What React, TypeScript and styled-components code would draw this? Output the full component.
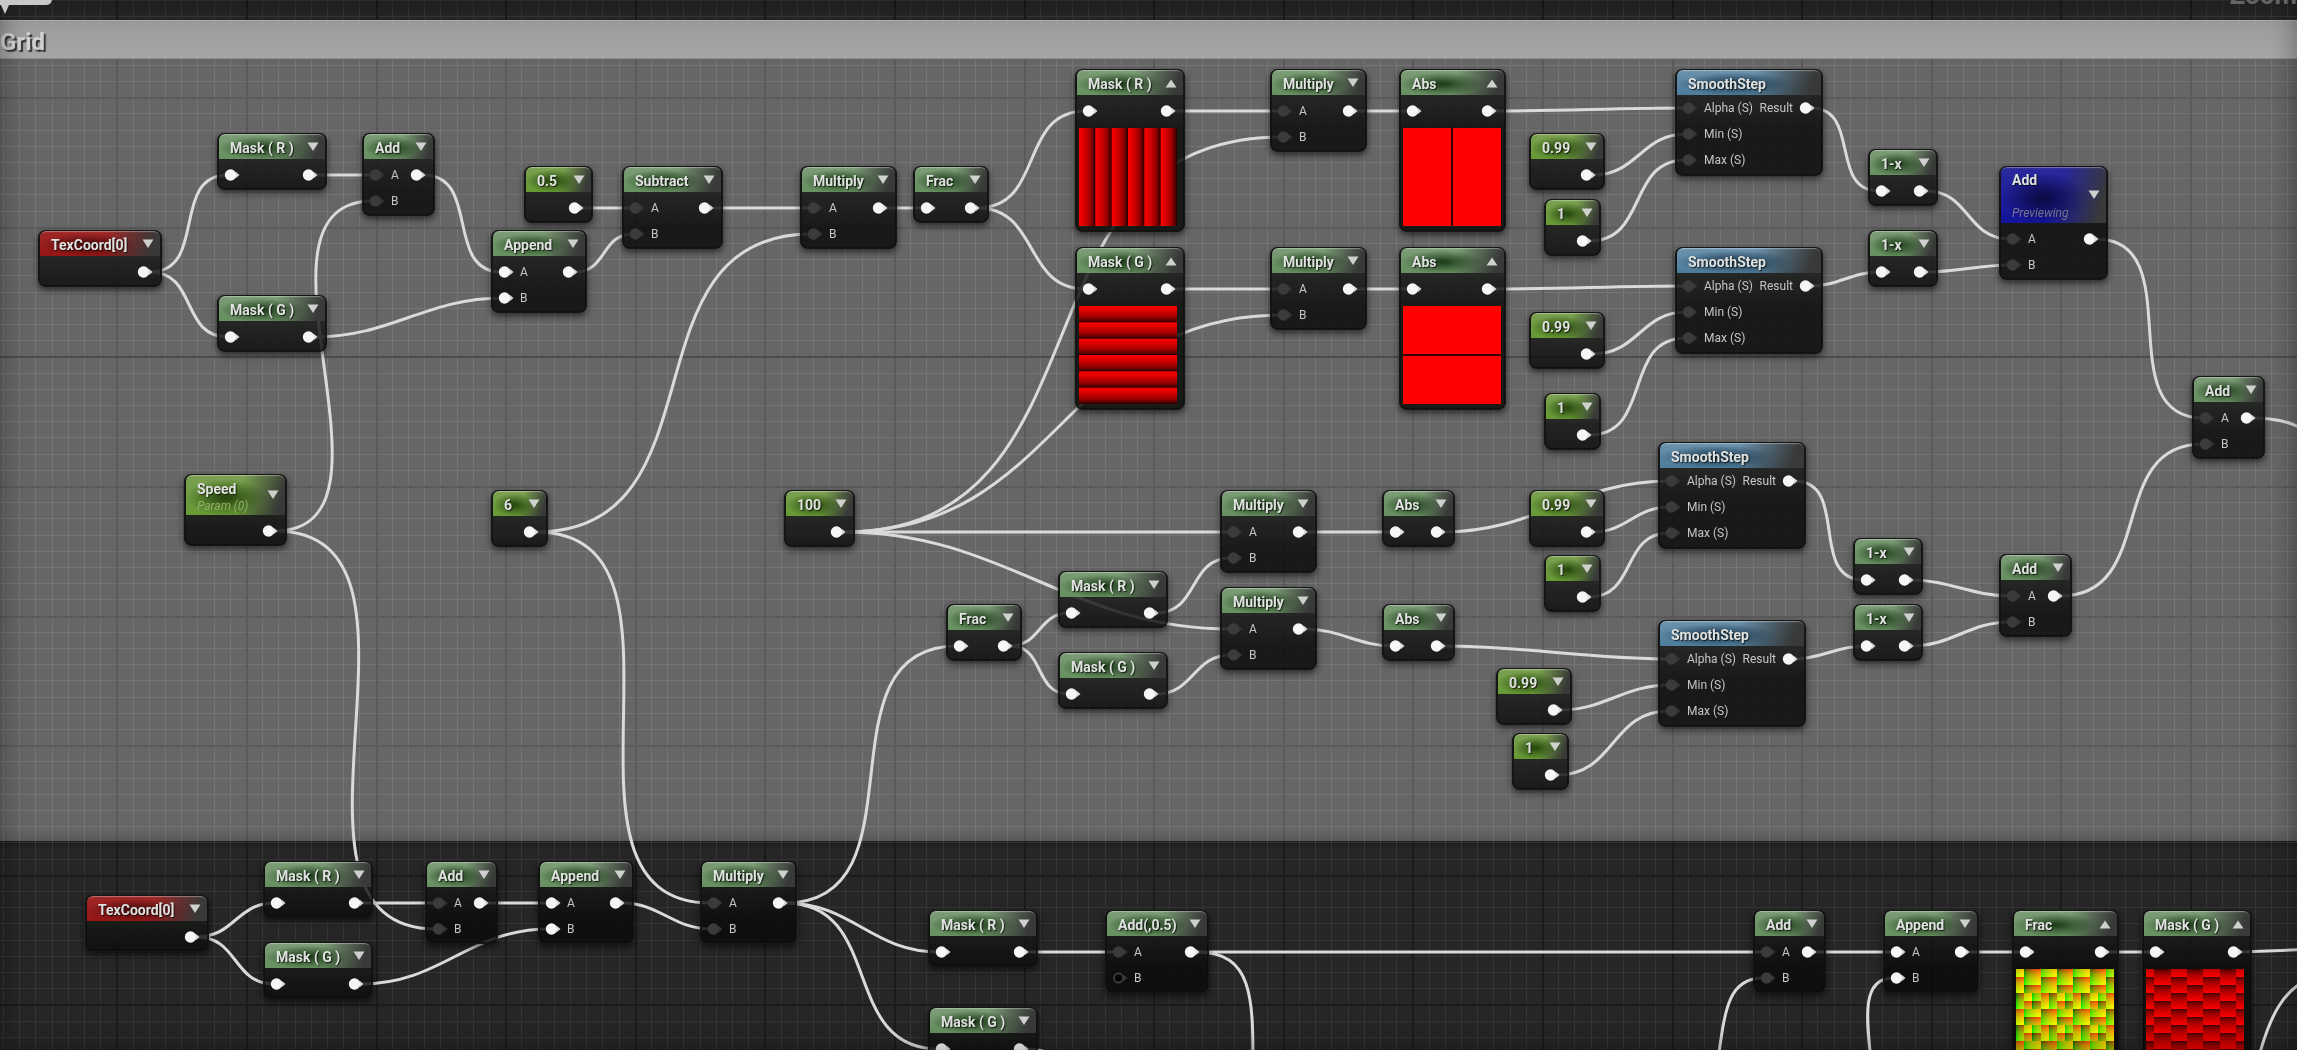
import React from 'react';
import styled, { createGlobalStyle, css } from 'styled-components';

/* ---------- data ---------- */

type Tone = 'math' | 'constant' | 'coord' | 'func' | 'active';
type PreviewKind = 'columns' | 'rows' | 'splitV' | 'splitH' | 'bricks' | 'bricksMixed';
type PinState = 'solid' | 'dim' | 'empty';
type HeaderSize = 'plain' | 'param' | 'tall';

interface InputPin {
  label?: string;
  state: PinState;
}

interface NodeData {
  id: string;
  title: string;
  subtitle?: string;
  tone: Tone;
  x: number;
  y: number;
  w: number;
  inputs: InputPin[];
  outputLabel?: string;
  preview?: PreviewKind;
}

const single: InputPin[] = [{ state: 'solid' }];
const dimAB: InputPin[] = [
  { label: 'A', state: 'dim' },
  { label: 'B', state: 'dim' },
];
const solidAB: InputPin[] = [
  { label: 'A', state: 'solid' },
  { label: 'B', state: 'solid' },
];
const halfAB: InputPin[] = [
  { label: 'A', state: 'dim' },
  { label: 'B', state: 'empty' },
];
const stepPins: InputPin[] = [
  { label: 'Alpha (S)', state: 'dim' },
  { label: 'Min (S)', state: 'dim' },
  { label: 'Max (S)', state: 'dim' },
];

const math = (id: string, title: string, x: number, y: number, w: number, inputs: InputPin[], preview?: PreviewKind): NodeData => ({
  id, title, tone: 'math', x, y, w, inputs, preview,
});
const constant = (id: string, title: string, x: number, y: number, w: number): NodeData => ({
  id, title, tone: 'constant', x, y, w, inputs: [],
});
const step = (id: string, x: number, y: number): NodeData => ({
  id, title: 'SmoothStep', tone: 'func', x, y, w: 148, inputs: stepPins, outputLabel: 'Result',
});

const nodes: NodeData[] = [
  { id: 'tex1', title: 'TexCoord[0]', tone: 'coord', x: 38, y: 230, w: 124, inputs: [] },
  math('maskR1', 'Mask ( R )', 217, 133, 110, single),
  math('maskG1', 'Mask ( G )', 217, 295, 110, single),
  math('add1', 'Add', 362, 133, 73, dimAB),
  math('append1', 'Append', 491, 230, 96, solidAB),
  constant('half', '0.5', 524, 166, 69),
  math('subtract', 'Subtract', 622, 166, 101, dimAB),
  math('mul1', 'Multiply', 800, 166, 97, dimAB),
  math('frac1', 'Frac', 913, 166, 76, single),
  { id: 'speed', title: 'Speed', subtitle: 'Param (0)', tone: 'constant', x: 184, y: 474, w: 103, inputs: [] },
  constant('six', '6', 491, 490, 57),
  constant('hundred', '100', 784, 490, 71),

  math('maskRp', 'Mask ( R )', 1075, 69, 110, single, 'columns'),
  math('maskGp', 'Mask ( G )', 1075, 247, 110, single, 'rows'),
  math('mulR', 'Multiply', 1270, 69, 97, dimAB),
  math('mulG', 'Multiply', 1270, 247, 97, dimAB),
  math('absR', 'Abs', 1399, 69, 107, single, 'splitV'),
  math('absG', 'Abs', 1399, 247, 107, single, 'splitH'),
  constant('c99a', '0.99', 1529, 133, 76),
  constant('c1a', '1', 1544, 199, 57),
  constant('c99b', '0.99', 1529, 312, 76),
  constant('c1b', '1', 1544, 393, 57),
  step('step1', 1675, 69),
  step('step2', 1675, 247),
  math('inv1', '1-x', 1868, 149, 70, single),
  math('inv2', '1-x', 1868, 230, 70, single),
  { id: 'addPrev', title: 'Add', subtitle: 'Previewing', tone: 'active', x: 1999, y: 166, w: 109, inputs: dimAB },
  math('addOut', 'Add', 2192, 376, 73, dimAB),

  math('frac2', 'Frac', 946, 604, 76, single),
  math('maskR2', 'Mask ( R )', 1058, 571, 110, single),
  math('maskG2', 'Mask ( G )', 1058, 652, 110, single),
  math('mul3', 'Multiply', 1220, 490, 97, dimAB),
  math('mul4', 'Multiply', 1220, 587, 97, dimAB),
  math('abs3', 'Abs', 1382, 490, 73, single),
  math('abs4', 'Abs', 1382, 604, 73, single),
  constant('c99c', '0.99', 1529, 490, 76),
  constant('c1c', '1', 1544, 555, 57),
  constant('c99d', '0.99', 1496, 668, 76),
  constant('c1d', '1', 1512, 733, 57),
  step('step3', 1658, 442),
  step('step4', 1658, 620),
  math('inv3', '1-x', 1853, 538, 70, single),
  math('inv4', '1-x', 1853, 604, 70, single),
  math('add4', 'Add', 1999, 554, 73, dimAB),

  { id: 'tex2', title: 'TexCoord[0]', tone: 'coord', x: 85, y: 895, w: 124, inputs: [] },
  math('maskR3', 'Mask ( R )', 263, 861, 110, single),
  math('maskG3', 'Mask ( G )', 263, 942, 110, single),
  math('add5', 'Add', 425, 861, 73, dimAB),
  math('append5', 'Append', 538, 861, 96, solidAB),
  math('mul5', 'Multiply', 700, 861, 97, dimAB),
  math('maskR6', 'Mask ( R )', 928, 910, 110, single),
  math('maskG6', 'Mask ( G )', 928, 1007, 110, single),
  math('addHalf', 'Add(,0.5)', 1105, 910, 104, halfAB),
  math('addRow', 'Add', 1753, 910, 73, dimAB),
  math('appendRow', 'Append', 1883, 910, 96, solidAB),
  math('fracRow', 'Frac', 2012, 910, 107, single, 'bricksMixed'),
  math('maskRow', 'Mask ( G )', 2142, 910, 110, single, 'bricks'),
];

const links: [string, string, number][] = [
  ['tex1', 'maskR1', 0], ['tex1', 'maskG1', 0], ['maskR1', 'add1', 0], ['speed', 'add1', 1],
  ['add1', 'append1', 0], ['maskG1', 'append1', 1], ['half', 'subtract', 0], ['append1', 'subtract', 1],
  ['subtract', 'mul1', 0], ['six', 'mul1', 1], ['mul1', 'frac1', 0], ['frac1', 'maskRp', 0],
  ['frac1', 'maskGp', 0], ['maskRp', 'mulR', 0], ['hundred', 'mulR', 1], ['maskGp', 'mulG', 0],
  ['hundred', 'mulG', 1], ['mulR', 'absR', 0], ['mulG', 'absG', 0], ['absR', 'step1', 0],
  ['absG', 'step2', 0], ['c99a', 'step1', 1], ['c1a', 'step1', 2], ['c99b', 'step2', 1],
  ['c1b', 'step2', 2], ['step1', 'inv1', 0], ['step2', 'inv2', 0], ['inv1', 'addPrev', 0],
  ['inv2', 'addPrev', 1], ['addPrev', 'addOut', 0], ['add4', 'addOut', 1],
  ['hundred', 'mul3', 0], ['hundred', 'mul4', 0], ['frac2', 'maskR2', 0], ['frac2', 'maskG2', 0],
  ['maskR2', 'mul3', 1], ['maskG2', 'mul4', 1], ['mul3', 'abs3', 0], ['mul4', 'abs4', 0],
  ['abs3', 'step3', 0], ['abs4', 'step4', 0], ['c99c', 'step3', 1], ['c1c', 'step3', 2],
  ['c99d', 'step4', 1], ['c1d', 'step4', 2], ['step3', 'inv3', 0], ['step4', 'inv4', 0],
  ['inv3', 'add4', 0], ['inv4', 'add4', 1],
  ['tex2', 'maskR3', 0], ['tex2', 'maskG3', 0], ['maskR3', 'add5', 0], ['speed', 'add5', 1],
  ['add5', 'append5', 0], ['maskG3', 'append5', 1], ['six', 'mul5', 0], ['append5', 'mul5', 1],
  ['mul5', 'frac2', 0], ['mul5', 'maskR6', 0], ['mul5', 'maskG6', 0], ['maskR6', 'addHalf', 0],
  ['addHalf', 'addRow', 0], ['addRow', 'appendRow', 0], ['appendRow', 'fracRow', 0], ['fracRow', 'maskRow', 0],
];

/* Links whose other end is outside the visible part of the graph. */
const openLinks = [
  'M2253 418 C2282 418 2300 424 2330 446',
  'M1197 952 C1254 952 1253 1000 1253 1070',
  'M1718 1060 C1725 1010 1728 978 1763 978',
  'M1871 1060 C1866 1016 1862 978 1893 978',
  'M2240 952 L2320 949',
  'M2258 1060 C2270 1014 2284 990 2310 978',
  'M1026 1049 C1042 1049 1048 1052 1056 1060',
];

/* ---------- wires ---------- */

const nodeById = new Map(nodes.map((n) => [n.id, n]));

const headerHeights: Record<HeaderSize, number> = { plain: 25, param: 40, tall: 56 };
const PIN_ROW = 26;

const headerSize = (n: NodeData): HeaderSize => {
  if (!n.subtitle) return 'plain';
  return n.tone === 'active' ? 'tall' : 'param';
};

const pinY = (n: NodeData, index: number) =>
  n.y + 1 + headerHeights[headerSize(n)] + (n.tone === 'func' ? 0 : 3) + PIN_ROW / 2 + index * PIN_ROW;

const wirePath = (from: NodeData, to: NodeData, index: number) => {
  const x1 = from.x + from.w - 12;
  const y1 = pinY(from, 0);
  const x2 = to.x + 11;
  const y2 = pinY(to, index);
  const reach = (Math.abs(x2 - x1) + Math.abs(y2 - y1)) / 3;
  return `M${x1} ${y1} C${x1 + reach} ${y1} ${x2 - reach} ${y2} ${x2} ${y2}`;
};

/* ---------- styles ---------- */

const GlobalStyle = createGlobalStyle`
  *, *::before, *::after { box-sizing: border-box; }
  html, body { margin: 0; background: #262626; }
`;

const Graph = styled.main`
  position: relative;
  display: flex;
  flex-direction: column;
  height: 100vh;
  padding-top: 20px;
  overflow: hidden;
  background: #262626;
  color: #dcdcdc;
  font-family: Roboto, 'Liberation Sans', sans-serif;
`;

const GridLayer = styled.svg`
  position: absolute;
  inset: 0;
  width: 100%;
  height: 100%;
`;

const CommentTitle = styled.h1`
  position: relative;
  flex: none;
  height: 39px;
  margin: 0;
  border-top: 1px solid #b0b0b0;
  border-bottom: 1px solid #8c8c8c;
  font-size: 24px;
  line-height: 42px;
  font-weight: 700;
  color: #d2d2d2;
  text-shadow: 2px 2px 1px rgba(30, 30, 30, 0.8);
  background: linear-gradient(#9c9c9c, #a6a6a6);
`;

/* Adds light to the canvas so that the grid stays visible through the comment. */
const CommentBody = styled.div`
  flex: 0 0 782px;
  mix-blend-mode: plus-lighter;
  background: linear-gradient(#404040 calc(100% - 12px), #343434);
`;

const CommentShade = styled.div`
  flex: none;
  height: 8px;
  background: linear-gradient(rgba(0, 0, 0, 0.35), transparent);
`;

const EdgeShade = styled.div`
  position: absolute;
  inset: 0;
  pointer-events: none;
  box-shadow: inset 0 0 28px rgba(0, 0, 0, 0.4);
`;

const Wires = styled.svg`
  position: absolute;
  inset: 0;
  width: 100%;
  height: 100%;
  fill: none;
  stroke: #dadada;
  stroke-width: 3;
`;

const ZoomLabel = styled.p`
  position: absolute;
  top: -18px;
  right: 0;
  margin: 0;
  font-size: 26px;
  line-height: 26px;
  font-weight: 700;
  color: #646464;
`;

const Bubble = styled.svg`
  position: absolute;
  top: 0;
  left: 0;
`;

const tones: Record<Tone, { light: string; base: string; dark: string }> = {
  math: { light: '#7c9c77', base: '#66905f', dark: '#23401f' },
  constant: { light: '#7ca152', base: '#659a33', dark: '#2b4a10' },
  coord: { light: '#a12828', base: '#961616', dark: '#4c0d0d' },
  func: { light: '#6d93ad', base: '#4c7c9c', dark: '#203c50' },
  active: { light: '#2a2a9c', base: '#14149c', dark: '#0b0b48' },
};

const Card = styled.article<{ $x: number; $y: number; $w: number }>`
  position: absolute;
  left: ${(p) => p.$x}px;
  top: ${(p) => p.$y}px;
  width: ${(p) => p.$w}px;
  padding-bottom: 1px;
  border: 1px solid #161616;
  border-radius: 7px;
  background: linear-gradient(rgba(22, 24, 22, 0.82) 26px, rgba(9, 11, 8, 0.84) 60px);
  box-shadow: 0 3px 7px rgba(0, 0, 0, 0.6), inset 0 0 0 1px rgba(10, 10, 10, 0.6);
`;

const Header = styled.header<{ $tone: Tone; $size: HeaderSize }>`
  display: flex;
  align-items: center;
  justify-content: space-between;
  height: ${(p) => headerHeights[p.$size]}px;
  margin: 0 1px;
  padding: 0 6px 0 11px;
  border-radius: 6px 6px 0 0;
  box-shadow: inset 0 2px 1px -1px rgba(255, 255, 255, 0.35);
  ${(p) => css`
    background:
      radial-gradient(ellipse 40% 46% at 40% 56%, ${tones[p.$tone].dark} 10%, transparent 100%),
      linear-gradient(108deg, transparent 52%, #383938 92%),
      linear-gradient(${tones[p.$tone].light}, ${tones[p.$tone].base});
  `}
`;

const titlePadding: Record<HeaderSize, string> = {
  plain: '3px 0 0',
  param: '5px 0 1px',
  tall: '4px 0 2px',
};

const Titles = styled.div<{ $size: HeaderSize }>`
  display: flex;
  flex-direction: column;
  justify-content: space-between;
  height: ${(p) => (p.$size === 'plain' ? 'auto' : '100%')};
  padding: ${(p) => titlePadding[p.$size]};
  white-space: nowrap;
`;

const Title = styled.h2`
  margin: 0;
  font-size: 14px;
  line-height: 18px;
  font-weight: 700;
  color: #dfe2df;
  text-shadow: 1px 1px 1px rgba(0, 0, 0, 0.7);
`;

const Subtitle = styled.p<{ $tone: Tone }>`
  margin: 0;
  font-size: 12px;
  line-height: 16px;
  font-style: italic;
  color: ${(p) => (p.$tone === 'active' ? '#74748e' : '#8fae62')};
`;

const Toggle = styled.button`
  display: flex;
  align-items: center;
  flex: none;
  width: 12px;
  height: 12px;
  padding: 0;
  border: 0;
  background: none;
  cursor: pointer;
`;

const Pins = styled.div<{ $tight: boolean }>`
  display: flex;
  justify-content: space-between;
  padding: ${(p) => (p.$tight ? '0 7px 1px 6px' : '3px 8px 0 6px')};
`;

const PinColumn = styled.div`
  display: flex;
  flex-direction: column;
`;

const PinRow = styled.div`
  display: flex;
  align-items: center;
  gap: 6px;
  height: ${PIN_ROW}px;
  font-size: 12px;
  line-height: 14px;
  color: #c6c6c6;
  white-space: nowrap;
`;

const Preview = styled.div<{ $kind: PreviewKind }>`
  width: 98px;
  height: 98px;
  margin: 4px 3px;
  overflow: hidden;
  ${(p) => p.$kind === 'columns' && css`
    background: linear-gradient(90deg, #ff0000, #d40000 35%, #9c0000 68%, #560000 90%, #180000) 0 0 / 16.667% 100%;
  `}
  ${(p) => p.$kind === 'rows' && css`
    background: linear-gradient(#ff0000, #d40000 35%, #9c0000 68%, #560000 90%, #180000) 0 0 / 100% 16.667%;
  `}
  ${(p) => p.$kind === 'splitV' && css`
    background: linear-gradient(#3a0000, #3a0000) center / 2px 100% no-repeat #ff0000;
  `}
  ${(p) => p.$kind === 'splitH' && css`
    background: linear-gradient(#3a0000, #3a0000) center / 100% 2px no-repeat #ff0000;
  `}
`;

/* ---------- drawings ---------- */

const CELL = 16.2;
const ORIGIN_ROW = 22;

function Grid() {
  const cols = Array.from({ length: 260 }, (_, i) => i);
  const rows = Array.from({ length: 140 }, (_, i) => i);
  return (
    <GridLayer aria-hidden="true" shapeRendering="crispEdges">
      {cols.filter((i) => i % 8 !== 7).map((i) => (
        <rect key={`c${i}`} x={Math.round(3 + i * CELL)} y="0" width="1" height="100%" fill="#353535" />
      ))}
      {rows.filter((i) => i % 8 !== 6).map((i) => (
        <rect key={`r${i}`} x="0" y={Math.round(i * CELL)} width="100%" height="1" fill="#353535" />
      ))}
      {cols.filter((i) => i % 8 === 7).map((i) => (
        <rect key={`C${i}`} x={Math.round(3 + i * CELL)} y="0" width="2" height="100%" fill="#1b1b1b" />
      ))}
      {rows.filter((i) => i % 8 === 6).map((i) => (
        <rect key={`R${i}`} x="0" y={Math.round(i * CELL)} width="100%" height="2" fill={i === ORIGIN_ROW ? '#0c0c0c' : '#1b1b1b'} />
      ))}
    </GridLayer>
  );
}

function Pin({ state }: { state: PinState }) {
  const color = state === 'solid' ? '#f6f6f6' : '#3b3b3b';
  return (
    <svg width="16" height="12" viewBox="0 0 16 12" aria-hidden="true">
      <path d="M11.5 2.5 L15.5 6 L11.5 9.5 Z" fill={state === 'solid' ? '#d8d8d8' : '#333333'} />
      {state === 'empty' ? (
        <circle cx="6.5" cy="6" r="4.6" fill="#050505" stroke="#444444" strokeWidth="1.6" />
      ) : (
        <circle cx="6.5" cy="6" r="5.7" fill={color} />
      )}
    </svg>
  );
}

const gammaStops = [0, 0.06, 0.15, 0.3, 0.5, 0.75, 1];

function Bricks({ mixed }: { mixed: boolean }) {
  const unit = 98 / 6;
  const name = mixed ? 'mixed' : 'plain';
  const vertical: React.ReactNode[] = [];
  for (let c = 0; c < 7; c += 1) {
    for (let r = -1; r < 7; r += 1) {
      const even = c % 2 === 0;
      vertical.push(
        <rect key={`${c}-${r}`} x={(c - 0.5) * unit} y={r * 16 + (even ? 8 : 0)} width={unit} height={16} fill={`url(#${name}-v)`} />,
      );
    }
  }
  const horizontal: React.ReactNode[] = [];
  const bands = [[0, 24, 0], [24, 16, 1], [40, 16, 0], [56, 16, 1], [72, 16, 0], [88, 16, 1]];
  bands.forEach(([top, height, shifted]) => {
    for (let c = 0; c < 8; c += 1) {
      horizontal.push(
        <rect key={`${top}-${c}`} x={(c - (shifted ? 1 : 0.5)) * unit} y={top} width={unit} height={height} fill="url(#mixed-h)" />,
      );
    }
  });
  return (
    <svg width="98" height="98" aria-hidden="true" shapeRendering="crispEdges">
      <defs>
        <linearGradient id={`${name}-v`} x1="0" y1="0" x2="0" y2="1">
          {gammaStops.map((s) => {
            const v = Math.round(255 * Math.pow(s * 0.93 + 0.05, 1 / 2.2));
            return <stop key={s} offset={s} stopColor={mixed ? `rgb(0,${v},0)` : `rgb(${v},0,0)`} />;
          })}
        </linearGradient>
        <linearGradient id="mixed-h">
          {gammaStops.map((s) => (
            <stop key={s} offset={s} stopColor={`rgb(${Math.round(255 * Math.pow(s, 1 / 2.2))},0,0)`} />
          ))}
        </linearGradient>
      </defs>
      {vertical}
      {mixed && <g style={{ mixBlendMode: 'screen' }}>{horizontal}</g>}
    </svg>
  );
}

/* ---------- node ---------- */

function GraphNode({ node }: { node: NodeData }) {
  const size = headerSize(node);
  const open = Boolean(node.preview);
  return (
    <Card $x={node.x} $y={node.y} $w={node.w}>
      <Header $tone={node.tone} $size={size}>
        <Titles $size={size}>
          <Title>{node.title}</Title>
          {node.subtitle && <Subtitle $tone={node.tone}>{node.subtitle}</Subtitle>}
        </Titles>
        {node.tone !== 'func' && (
          <Toggle type="button" aria-label={`Preview ${node.title}`} aria-expanded={open}>
            <svg width="12" height="10" viewBox="0 0 12 10" aria-hidden="true">
              <path d={open ? 'M6 1.5 L11.5 9.5 H0.5 Z' : 'M0.5 0.5 H11.5 L6 9 Z'} fill="#cfd1cf" />
            </svg>
          </Toggle>
        )}
      </Header>
      <Pins $tight={node.tone === 'func'}>
        <PinColumn>
          {node.inputs.map((pin, i) => (
            <PinRow key={i}>
              <Pin state={pin.state} />
              {pin.label}
            </PinRow>
          ))}
        </PinColumn>
        <PinColumn>
          <PinRow>
            {node.outputLabel}
            <Pin state="solid" />
          </PinRow>
        </PinColumn>
      </Pins>
      {node.preview && (
        <Preview $kind={node.preview}>
          {node.preview === 'bricks' && <Bricks mixed={false} />}
          {node.preview === 'bricksMixed' && <Bricks mixed />}
        </Preview>
      )}
    </Card>
  );
}

export default function App() {
  return (
    <>
      <GlobalStyle />
      <Graph>
        <Grid />
        <CommentTitle>Grid</CommentTitle>
        <CommentBody />
        <CommentShade />
        <Wires aria-hidden="true">
          {links.map(([from, to, index]) => (
            <path key={`${from}-${to}-${index}`} d={wirePath(nodeById.get(from)!, nodeById.get(to)!, index)} />
          ))}
          {openLinks.map((d) => (
            <path key={d} d={d} />
          ))}
        </Wires>
        {nodes.map((node) => (
          <GraphNode key={node.id} node={node} />
        ))}
        <EdgeShade />
        <ZoomLabel>Zoom</ZoomLabel>
        <Bubble width="54" height="16" viewBox="0 0 54 16" aria-hidden="true">
          <path d="M0 0 H52 Q51 5 46 5 H9 L5 14 L1 5 H0 Z" fill="#c8c8c8" />
        </Bubble>
      </Graph>
    </>
  );
}
